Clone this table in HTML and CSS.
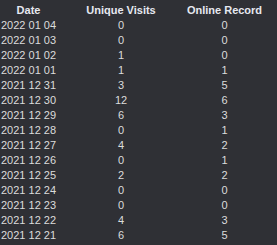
FILE: index.html
```html
<!DOCTYPE html>
<html>
<head>
<meta charset="utf-8">
<link rel="stylesheet" href="styles.css">
</head>
<body>
<table class="stats">
  <colgroup>
    <col class="c-date"><col class="c-uv"><col class="c-or">
  </colgroup>
  <thead>
    <tr><th>Date</th><th>Unique Visits</th><th>Online Record</th></tr>
  </thead>
  <tbody>
    <tr><td>2022 01 04</td><td>0</td><td>0</td></tr>
    <tr><td>2022 01 03</td><td>0</td><td>0</td></tr>
    <tr><td>2022 01 02</td><td>1</td><td>0</td></tr>
    <tr><td>2022 01 01</td><td>1</td><td>1</td></tr>
    <tr><td>2021 12 31</td><td>3</td><td>5</td></tr>
    <tr><td>2021 12 30</td><td>12</td><td>6</td></tr>
    <tr><td>2021 12 29</td><td>6</td><td>3</td></tr>
    <tr><td>2021 12 28</td><td>0</td><td>1</td></tr>
    <tr><td>2021 12 27</td><td>4</td><td>2</td></tr>
    <tr><td>2021 12 26</td><td>0</td><td>1</td></tr>
    <tr><td>2021 12 25</td><td>2</td><td>2</td></tr>
    <tr><td>2021 12 24</td><td>0</td><td>0</td></tr>
    <tr><td>2021 12 23</td><td>0</td><td>0</td></tr>
    <tr><td>2021 12 22</td><td>4</td><td>3</td></tr>
    <tr><td>2021 12 21</td><td>6</td><td>5</td></tr>
  </tbody>
</table>
</body>
</html>
```
FILE: styles.css
```css
html, body {
  margin: 0;
  padding: 0;
  background: #2f3035;
  height: 100%;
}
body {
  font-family: "Liberation Sans", Arial, sans-serif;
  font-size: 11px;
  color: #dcdcdc;
  padding: 3px 0 0 1px;
  box-sizing: border-box;
}
.stats {
  border-collapse: collapse;
  table-layout: fixed;
  width: 262px;
}
.stats th, .stats td {
  padding: 0;
  height: 15px;
  line-height: 15px;
  text-align: center;
  white-space: nowrap;
}
.stats th {
  font-weight: bold;
  color: #e6e8f0;
}
.stats td:first-child {
  text-align: left;
}
.c-date { width: 55px; }
.c-uv { width: 130px; }
.c-or { width: 77px; }
```
